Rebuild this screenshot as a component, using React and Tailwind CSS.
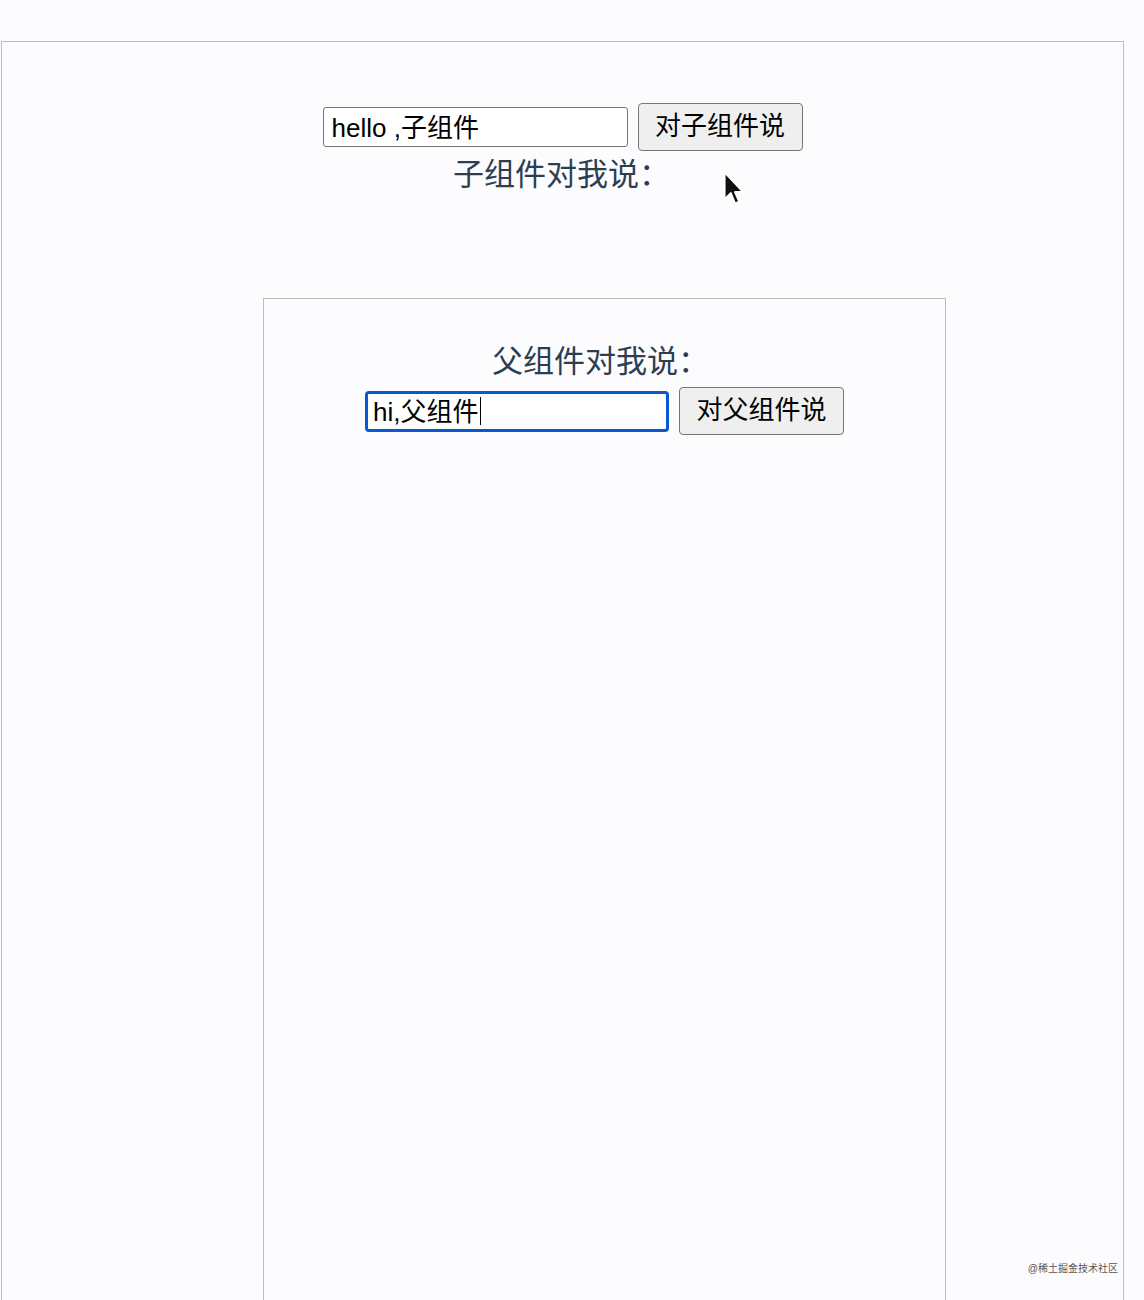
import React, { useState } from "react";

const FONT = { fontFamily: '"Liberation Sans", "Noto Sans CJK SC", sans-serif' };

const Cursor = () => (
  <svg
    className="absolute left-[721px] top-[170px]"
    width="26"
    height="38"
    viewBox="0 0 24 36"
  >
    <path
      d="M3 2 L3 28 L9 22 L13 32 L17 30 L13 21 L21 21 Z"
      fill="#111"
      stroke="#fff"
      strokeWidth="2"
      strokeLinejoin="round"
    />
  </svg>
);

const Row = ({ value, onChange, label, focused }) => (
  <div className="flex items-center gap-[10px]">
    <div className="relative">
      <input
        value={value}
        onChange={onChange}
        className={
          focused
            ? "w-[304px] h-[41px] px-[5px] pb-[4px] text-[26px] text-black bg-white border-[3px] border-[#0b57d0] rounded-[4px] outline-none"
            : "w-[305px] h-[40px] px-[8px] pb-[4px] text-[26px] text-black bg-white border border-[#767676] rounded-[3px] outline-none"
        }
        style={FONT}
      />
      {focused && (
        <span className="absolute left-[115px] top-[6px] w-px h-[28px] bg-black" />
      )}
    </div>
    <button
      className="w-[165px] h-[48px] pb-[2px] text-[26px] text-black bg-[#efefef] border border-[#767676] rounded-[4px]"
      style={FONT}
    >
      {label}
    </button>
  </div>
);

export default function App() {
  const [toChild, setToChild] = useState("hello ,子组件");
  const [toParent, setToParent] = useState("hi,父组件");

  return (
    <div className="relative h-[1300px] overflow-hidden bg-[#fcfcff]" style={FONT}>
      <div className="mt-[41px] ml-px w-[1123px] h-[1300px] border border-[#bdbdbd] pt-[61px]">
        {/* parent */}
        <div className="flex flex-col items-center">
          <Row
            value={toChild}
            onChange={(e) => setToChild(e.target.value)}
            label="对子组件说"
          />
          <div className="mt-[4px] text-[31px] leading-[40px] text-[#2c3e50] pr-[2px]">
            子组件对我说：
          </div>
        </div>

        {/* child */}
        <div className="mt-[103px] ml-[261px] w-[683px] h-[1100px] border border-[#bdbdbd] pt-[43px]">
          <div className="flex flex-col items-center">
            <div className="mb-[5px] text-[31px] leading-[40px] text-[#2c3e50] pr-[8px]">
              父组件对我说：
            </div>
            <Row
              value={toParent}
              onChange={(e) => setToParent(e.target.value)}
              label="对父组件说"
              focused
            />
          </div>
        </div>
      </div>

      <Cursor />

      <div className="absolute right-[26px] top-[1261px] text-[10px] text-[#555]">
        @稀土掘金技术社区
      </div>
    </div>
  );
}
